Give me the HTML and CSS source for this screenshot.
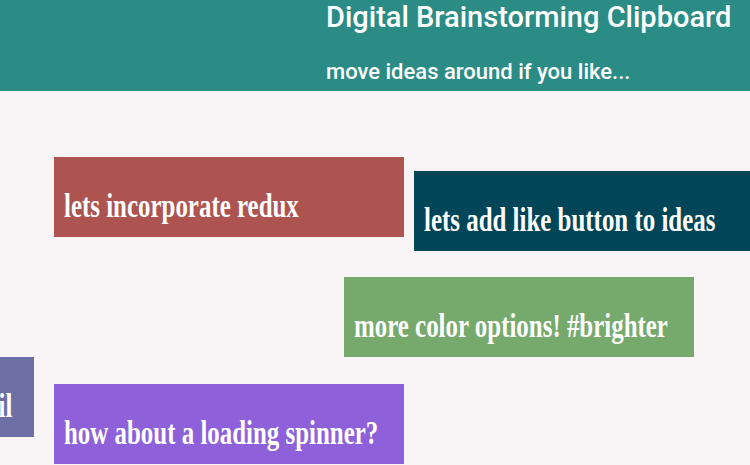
FILE: index.html
```html
<!DOCTYPE html>
<html>
<head>
<meta charset="utf-8">
<link rel="stylesheet" href="styles.css">
</head>
<body>
<header class="header">
  <h1 class="title">Digital Brainstorming Clipboard</h1>
  <p class="subtitle">move ideas around if you like...</p>
</header>
<main class="board">
  <div class="note note-red" style="left:54px;top:66px"><span class="note-text">lets incorporate redux</span></div>
  <div class="note note-navy" style="left:414px;top:80px"><span class="note-text">lets add like button to ideas</span></div>
  <div class="note note-green" style="left:344px;top:186px"><span class="note-text">more color options! #brighter</span></div>
  <div class="note note-slate" style="left:-316px;top:266px"><span class="note-text">sign up with name and email</span></div>
  <div class="note note-purple" style="left:54px;top:293px"><span class="note-text">how about a loading spinner?</span></div>
</main>
</body>
</html>
```
FILE: styles.css
```css
html, body {
  margin: 0;
  padding: 0;
  background: #f9f5f6;
  overflow: hidden;
  width: 750px;
  height: 465px;
}
.header {
  background: #2a8c85;
  height: 91px;
  box-sizing: border-box;
  padding-left: 326px;
  display: flex;
  flex-direction: column;
  color: #ffffff;
  font-family: Roboto, "Noto Sans", sans-serif;
}
.title {
  margin: 0;
  font-size: 29px;
  font-weight: 500;
  line-height: 34px;
  letter-spacing: 0;
}
.subtitle {
  margin: 25px 0 0 0;
  font-size: 22px;
  font-weight: 500;
  line-height: 26px;
  letter-spacing: 0;
}
.board {
  position: relative;
  height: 374px;
}
.note {
  position: absolute;
  width: 350px;
  height: 80px;
  box-sizing: border-box;
  padding: 33px 0 0 10px;
  color: #ffffff;
  font-family: "Liberation Serif", "Times New Roman", serif;
  font-weight: bold;
  font-size: 33px;
  line-height: 33px;
  white-space: nowrap;
}
.note-text {
  display: inline-block;
  transform: scaleX(0.755);
  transform-origin: left center;
}
.note-red { background: #ad5350; }
.note-navy { background: #004558; }
.note-green { background: #76aa6d; }
.note-slate {
  background: #6e6fa5;
  padding: 33px 22px 0 0;
  display: flex;
  justify-content: flex-end;
  align-items: flex-start;
  overflow: hidden;
}
.note-slate .note-text {
  transform-origin: right center;
  flex-shrink: 0;
}
.note-purple { background: #8e61db; }
```
